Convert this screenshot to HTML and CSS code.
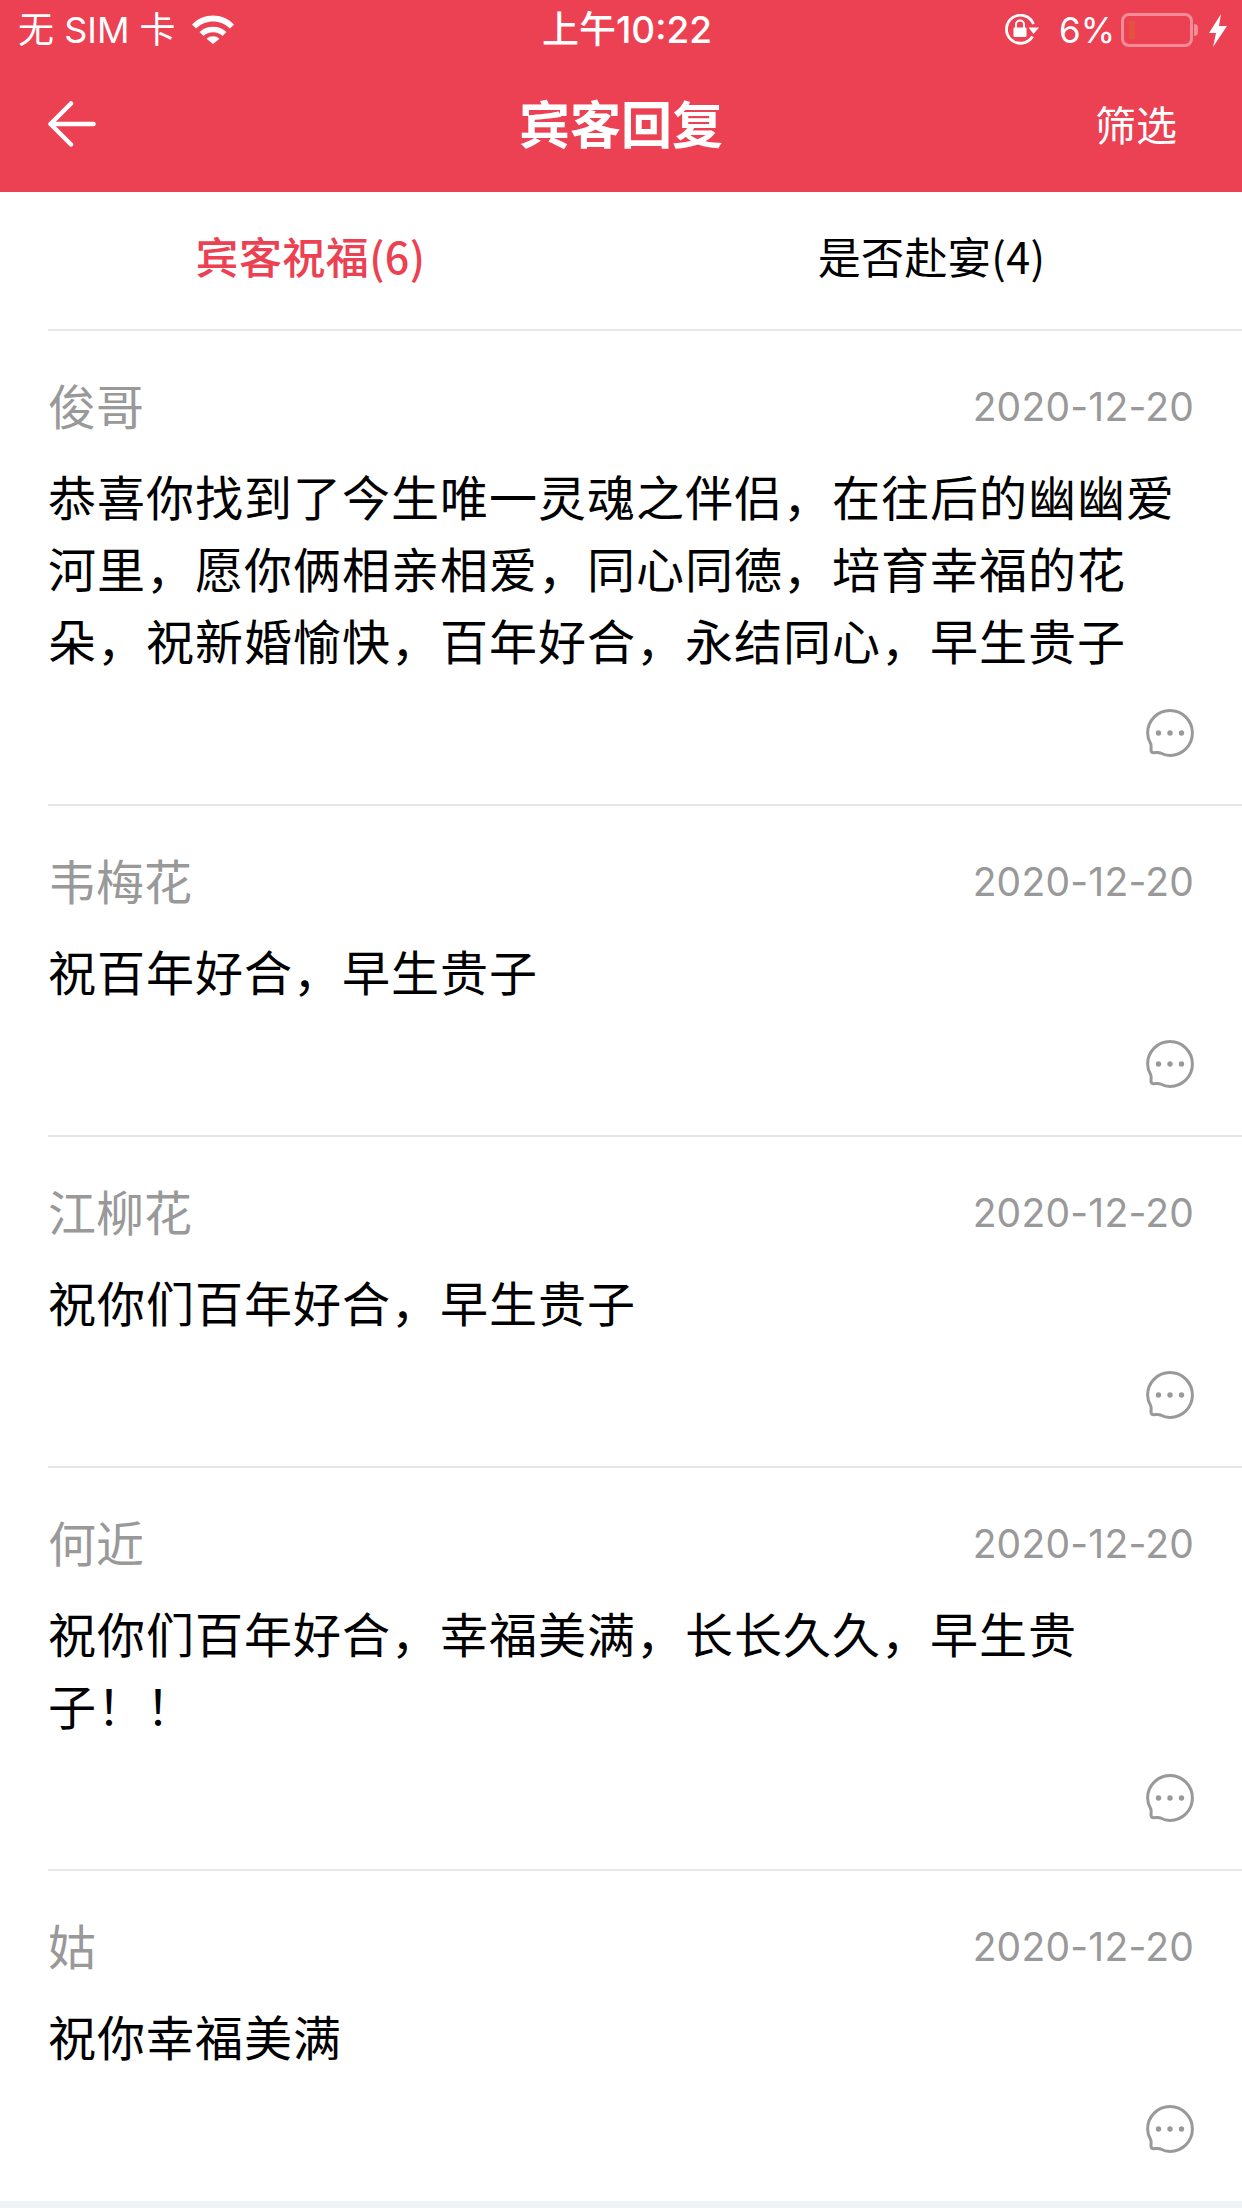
FILE: index.html
```html
<!DOCTYPE html>
<html lang="zh">
<head>
<meta charset="utf-8">
<title>宾客回复</title>
<link rel="stylesheet" href="styles.css">
</head>
<body>
<svg class="defs" width="0" height="0" aria-hidden="true">
  <symbol id="bubble" viewBox="0 0 48 48">
    <path d="M5 41 C5 38.500 5.500 37 4.800 35 C3 32 1.600 28.500 1.600 24 C1.600 11.600 11.600 1.600 24 1.600 C36.400 1.600 46.400 11.600 46.400 24 C46.400 36.400 36.400 46.400 24 46.400 C20 46.400 17.500 45.500 14.500 44 C12.500 43.200 10.500 43.700 8 43.700 C6 43.700 5 43 5 41 Z" fill="none" stroke="#999" stroke-width="3"/>
    <circle cx="12.500" cy="24" r="2.700" fill="#999"/>
    <circle cx="24" cy="24" r="2.700" fill="#999"/>
    <circle cx="35.500" cy="24" r="2.700" fill="#999"/>
  </symbol>
</svg>
<header class="top">
  <div class="status">
    <div class="status-left">
      <span>无 SIM 卡</span>
      <svg class="wifi" width="42" height="30" viewBox="0 0 42 30">
        <path d="M0 10.500 C11.500 -1.500 30.500 -1.500 42 10.500 L38 14.500 C28.500 5 13.500 5 4 14.500 Z" fill="#fff"/>
        <path d="M7.500 18 C14.500 11 27.500 11 34.500 18 L30.500 22 C25.500 17 16.500 17 11.500 22 Z" fill="#fff"/>
        <path d="M14.500 24.800 C18 21.500 24 21.500 27.500 24.800 L21 30 Z" fill="#fff"/>
      </svg>
    </div>
    <div class="clock">上午10:22</div>
    <div class="status-right">
      <svg class="lock" width="36" height="32" viewBox="0 0 36 32">
        <path d="M28.500 22.500 A14 14 0 1 1 29.500 10" fill="none" stroke="#fff" stroke-width="2.800"/>
        <path d="M24.500 13.500 H35 L29.500 20 Z" fill="#fff"/>
        <rect x="9.500" y="13.500" width="13" height="9.500" rx="1" fill="#fff"/>
        <path d="M12 14 V10.500 A4 4 0 0 1 20 10.500 V14" fill="none" stroke="#fff" stroke-width="2"/>
      </svg>
      <span class="pct">6%</span>
      <div class="battery"><div class="level"></div></div>
      <div class="cap"></div>
      <svg class="bolt" width="18" height="33" viewBox="0 0 18 33"><path d="M12 0 L0 19 H7 L4 33 L18 12 H10 Z" fill="#fff"/></svg>
    </div>
  </div>
  <nav class="bar">
    <svg class="back" width="48" height="46" viewBox="0 0 48 46">
      <path d="M23 2.500 L2.500 23 L23 43.500 M2.500 23 H45.500" fill="none" stroke="#fff" stroke-width="4.500" stroke-linecap="round" stroke-linejoin="round"/>
    </svg>
    <h1 class="title">宾客回复</h1>
    <span class="filter">筛选</span>
  </nav>
</header>
<div class="tabs">
  <div class="tab active">宾客祝福(6)</div>
  <div class="tab">是否赴宴(4)</div>
</div>
<main class="list">
  <article class="item">
    <div class="meta"><span class="name">俊哥</span><span class="date">2020-12-20</span></div>
    <p class="msg">恭喜你找到了今生唯一灵魂之伴侣，在往后的幽幽爱河里，愿你俩相亲相爱，同心同德，培育幸福的花朵，祝新婚愉快，百年好合，永结同心，早生贵子</p>
    <div class="actions"><svg class="bubble"><use href="#bubble"/></svg></div>
  </article>
  <article class="item">
    <div class="meta"><span class="name">韦梅花</span><span class="date">2020-12-20</span></div>
    <p class="msg">祝百年好合，早生贵子</p>
    <div class="actions"><svg class="bubble"><use href="#bubble"/></svg></div>
  </article>
  <article class="item">
    <div class="meta"><span class="name">江柳花</span><span class="date">2020-12-20</span></div>
    <p class="msg">祝你们百年好合，早生贵子</p>
    <div class="actions"><svg class="bubble"><use href="#bubble"/></svg></div>
  </article>
  <article class="item">
    <div class="meta"><span class="name">何近</span><span class="date">2020-12-20</span></div>
    <p class="msg">祝你们百年好合，幸福美满，长长久久，早生贵子！！</p>
    <div class="actions"><svg class="bubble"><use href="#bubble"/></svg></div>
  </article>
  <article class="item">
    <div class="meta"><span class="name">姑</span><span class="date">2020-12-20</span></div>
    <p class="msg">祝你幸福美满</p>
    <div class="actions"><svg class="bubble"><use href="#bubble"/></svg></div>
  </article>
</main>
</body>
</html>
```
FILE: styles.css
```css
* { box-sizing: border-box; }
html, body { margin: 0; padding: 0; }
body {
  width: 1242px;
  height: 2208px;
  overflow: hidden;
  background: #f1f2f4;
  font-family: "Noto Sans CJK SC", "Noto Sans", sans-serif;
  color: #000;
}
.defs { position: absolute; }
.top { height: 192px; background: #ec4053; color: #fff; }
.status {
  height: 60px;
  padding: 0 15px 0 18px;
  display: grid;
  grid-template-columns: 524px auto 1fr;
  align-items: center;
  font-family: "Inter", "Noto Sans CJK SC", sans-serif;
  font-size: 36px;
  line-height: 60px;
}
.status-left { display: flex; align-items: center; gap: 16px; }
.wifi { margin-top: -2px; }
.clock { font-size: 37px; font-weight: 500; }
.status-right { display: flex; align-items: center; justify-content: flex-end; }
.lock { margin-right: 19px; }
.pct { font-size: 35px; margin-right: 6px; }
.battery {
  width: 72px;
  height: 34px;
  padding: 5px;
  border: 3px solid rgba(255,255,255,0.4);
  border-radius: 8px;
}
.level { width: 6px; height: 100%; background: #e5533f; border-radius: 1px; }
.cap { width: 4px; height: 12px; background: rgba(255,255,255,0.4); border-radius: 0 4px 4px 0; margin-left: 1px; margin-right: 11px; }
.bar {
  height: 132px;
  padding: 0 65px 0 48px;
  display: flex;
  align-items: center;
  justify-content: space-between;
  position: relative;
  margin-top: -4px;
}
.title {
  position: absolute;
  left: 0;
  width: 100%;
  top: 0;
  margin: 0;
  text-align: center;
  font-size: 51px;
  line-height: 132px;
  font-weight: 700;
  pointer-events: none;
}
.filter { font-size: 41px; line-height: 1; margin-left: auto; padding-top: 2px; }
.back { flex: none; margin-top: 4px; }
.tabs { display: flex; height: 137px; background: #fff; padding-bottom: 12px; }
.tab { flex: 1; display: flex; justify-content: center; align-items: center; font-size: 43px; letter-spacing: 0.4px; }
.tab.active { color: #ec4053; font-weight: 500; }
.list { background: #fff; height: 1872px; overflow: hidden; }
.item {
  margin-left: 48px;
  padding-right: 48px;
  border-top: 2px solid #e6e6e6;
}
.meta {
  display: flex;
  justify-content: space-between;
  align-items: center;
  height: 76px;
  margin-top: 35px;
  color: #999;
}
.name { font-size: 48px; }
.date { font-family: "Inter", sans-serif; font-size: 39px; letter-spacing: 0.2px; padding-top: 4px; }
.msg {
  margin: 0;
  padding-top: 17px;
  font-size: 48px;
  line-height: 72px;
  letter-spacing: 1px;
}
.actions { display: flex; justify-content: flex-end; height: 129px; padding-top: 34px; }
.bubble { width: 48px; height: 48px; }
```
